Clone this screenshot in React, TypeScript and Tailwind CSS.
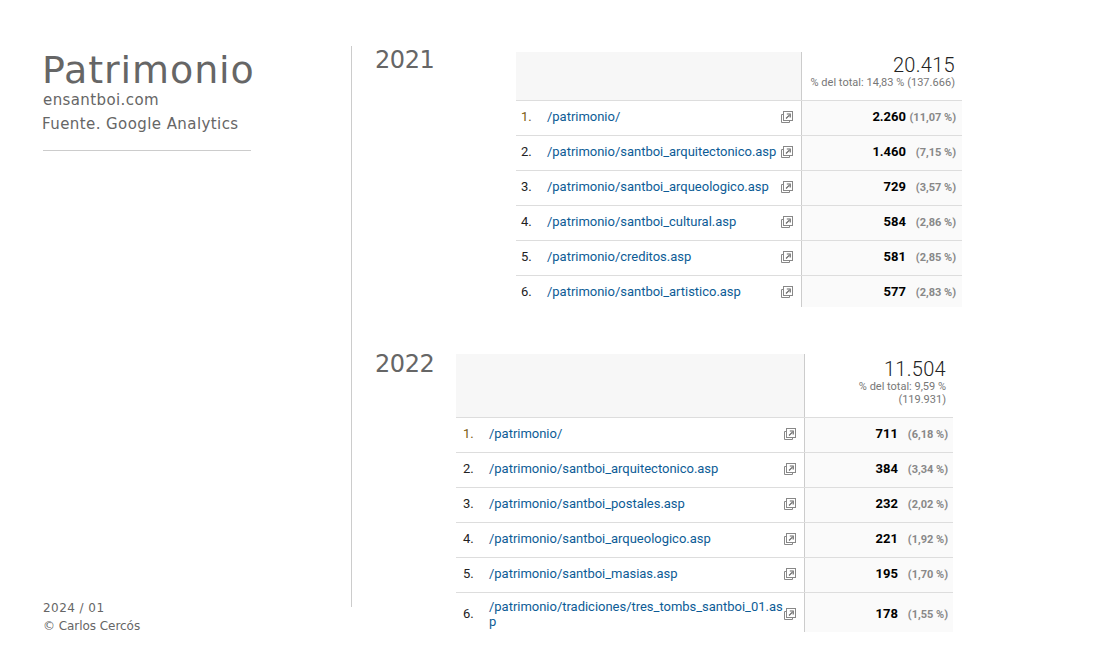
const table2021 = [
  { rank: "1.", page: "/patrimonio/", visits: "2.260", pct: "(11,07 %)" },
  { rank: "2.", page: "/patrimonio/santboi_arquitectonico.asp", visits: "1.460", pct: "(7,15 %)" },
  { rank: "3.", page: "/patrimonio/santboi_arqueologico.asp", visits: "729", pct: "(3,57 %)" },
  { rank: "4.", page: "/patrimonio/santboi_cultural.asp", visits: "584", pct: "(2,86 %)" },
  { rank: "5.", page: "/patrimonio/creditos.asp", visits: "581", pct: "(2,85 %)" },
  { rank: "6.", page: "/patrimonio/santboi_artistico.asp", visits: "577", pct: "(2,83 %)" },
]

const table2022 = [
  { rank: "1.", page: "/patrimonio/", visits: "711", pct: "(6,18 %)" },
  { rank: "2.", page: "/patrimonio/santboi_arquitectonico.asp", visits: "384", pct: "(3,34 %)" },
  { rank: "3.", page: "/patrimonio/santboi_postales.asp", visits: "232", pct: "(2,02 %)" },
  { rank: "4.", page: "/patrimonio/santboi_arqueologico.asp", visits: "221", pct: "(1,92 %)" },
  { rank: "5.", page: "/patrimonio/santboi_masias.asp", visits: "195", pct: "(1,70 %)" },
]

function LinkIcon() {
  return (
    <svg width="12" height="12" viewBox="0 0 12 12" fill="none" className="shrink-0">
      <path d="M2.5 3.5H.5V11.5H8.5V9.5" stroke="#888" strokeWidth="1" />
      <rect x="2.5" y="0.5" width="9" height="9" fill="#fff" stroke="#888" strokeWidth="1" />
      <path d="M5 7.5 8.2 4.3M5.8 3h3.4v3.4" stroke="#666" strokeWidth="1.2" />
    </svg>
  )
}

export default function App() {
  return (
    <div className="flex w-[1100px] h-[670px] bg-white overflow-hidden font-['Roboto',sans-serif]">
      {/* sidebar */}
      <aside className="w-[352px] shrink-0 pt-[46px] font-['DejaVu_Sans',sans-serif] text-[#666]">
        <div className="h-[561px] border-r border-[#ccc] pl-[42px] pt-[2px]">
          <h1 className="text-[38px] leading-[44px] tracking-[0.9px]">Patrimonio</h1>
          <p className="text-[15px] leading-[18px] pl-[1px] -mt-[1px] tracking-[0.4px]">ensantboi.com</p>
          <p className="text-[15px] leading-[18px] mt-[6px] tracking-[0.42px]">Fuente. Google Analytics</p>
          <div className="w-[208px] ml-[1px] mt-[17px] border-t border-[#ccc]" />
        </div>
        <div className="pl-[43px] -mt-[8px] text-[12px] leading-[18px]">
          <p className="tracking-[0.45px]">2024 / 01</p>
          <p className="tracking-[-0.05px]">© Carlos Cercós</p>
        </div>
      </aside>

      {/* tablas */}
      <main className="flex-1 pl-[23px] text-[#666]">
        <section className="flex pt-[46px] h-[354px]">
          <h2 className="w-[141px] shrink-0 font-['DejaVu_Sans',sans-serif] text-[24px] leading-[28px] tracking-[-0.4px]">2021</h2>
          <div className="w-[446px] mt-[6px]">
            <div className="flex h-[48px]">
              <div className="w-[285px] bg-[#f7f7f7]" />
              <div className="flex-1 border-l border-[#ccc] pr-[7px] text-right">
                <div className="text-[20px] leading-[23px] font-light tracking-[0.3px] text-[#222] mt-[2px]">20.415</div>
                <div className="text-[11px] leading-[13px] -mt-[1px] tracking-[0.03px] text-[#777]">% del total: 14,83 % (137.666)</div>
              </div>
            </div>
            {table2021.map((row, i) => (
              <div key={row.rank} className={`flex border-t border-[#ddd] ${i === 5 ? "h-[32px]" : "h-[35px]"}`}>
                <div className={`w-[285px] flex items-center pl-[5px] pr-[8px] text-[13px] tracking-[-0.02px] ${i === 5 ? "pb-0" : "pb-[3px]"}`}>
                  <span className={`w-[26px] shrink-0 ${i === 0 ? "text-[#7a5a10]" : "text-[#222]"}`}>{row.rank}</span>
                  <a className="flex-1 text-[#0d5c96]">{row.page}</a>
                  <LinkIcon />
                </div>
                <div className={`flex-1 flex items-center justify-end border-l border-[#ccc] bg-[#fafafa] pr-[6px] ${i === 5 ? "pb-0" : "pb-[3px]"}`}>
                  <span className="text-[13px] font-bold text-black">{row.visits}</span>
                  <span className="w-[50px] mt-[4px] text-right text-[11px] font-bold text-[#888]">{row.pct}</span>
                </div>
              </div>
            ))}
          </div>
        </section>

        <section className="flex">
          <h2 className="w-[81px] shrink-0 font-['DejaVu_Sans',sans-serif] text-[24px] leading-[28px] -mt-[4px] h-[28px] tracking-[-0.4px]">2022</h2>
          <div className="w-[497px]">
            <div className="flex h-[63px]">
              <div className="w-[348px] bg-[#f7f7f7]" />
              <div className="flex-1 border-l border-[#ccc] pr-[7px] text-right">
                <div className="text-[20px] leading-[23px] font-light tracking-[0.3px] text-[#222] mt-[4px]">11.504</div>
                <div className="text-[11px] leading-[13px] text-[#777] pl-[40px] mt-[-1px]">% del total: 9,59 % (119.931)</div>
              </div>
            </div>
            {table2022.map((row, i) => (
              <div key={row.rank} className="flex border-t border-[#ddd] h-[35px]">
                <div className="w-[348px] flex items-center pl-[7px] pr-[8px] pb-[3px] text-[13px] tracking-[-0.02px]">
                  <span className={`w-[26px] shrink-0 ${i === 0 ? "text-[#7a5a10]" : "text-[#222]"}`}>{row.rank}</span>
                  <a className="flex-1 text-[#0d5c96]">{row.page}</a>
                  <LinkIcon />
                </div>
                <div className="flex-1 flex items-center justify-end border-l border-[#ccc] bg-[#fafafa] pr-[5px] pb-[3px]">
                  <span className="text-[13px] font-bold text-black">{row.visits}</span>
                  <span className="w-[50px] mt-[4px] text-right text-[11px] font-bold text-[#888]">{row.pct}</span>
                </div>
              </div>
            ))}
            <div className="flex border-t border-[#ddd] h-[40px]">
              <div className="w-[348px] flex items-center pl-[7px] pr-[7px] pt-[2px] text-[13px] tracking-[-0.02px]">
                <span className="w-[26px] text-[#222] shrink-0">6.</span>
                <a className="w-[295px] shrink-0 break-all leading-[15px] text-[#0d5c96]">/patrimonio/tradiciones/tres_tombs_santboi_01.asp</a>
                <LinkIcon />
              </div>
              <div className="flex-1 flex items-center justify-end border-l border-[#ccc] bg-[#fafafa] pr-[5px] pt-[2px]">
                <span className="text-[13px] font-bold text-black">178</span>
                <span className="w-[50px] mt-[4px] text-right text-[11px] font-bold text-[#888]">(1,55 %)</span>
              </div>
            </div>
          </div>
        </section>
      </main>
    </div>
  )
}
